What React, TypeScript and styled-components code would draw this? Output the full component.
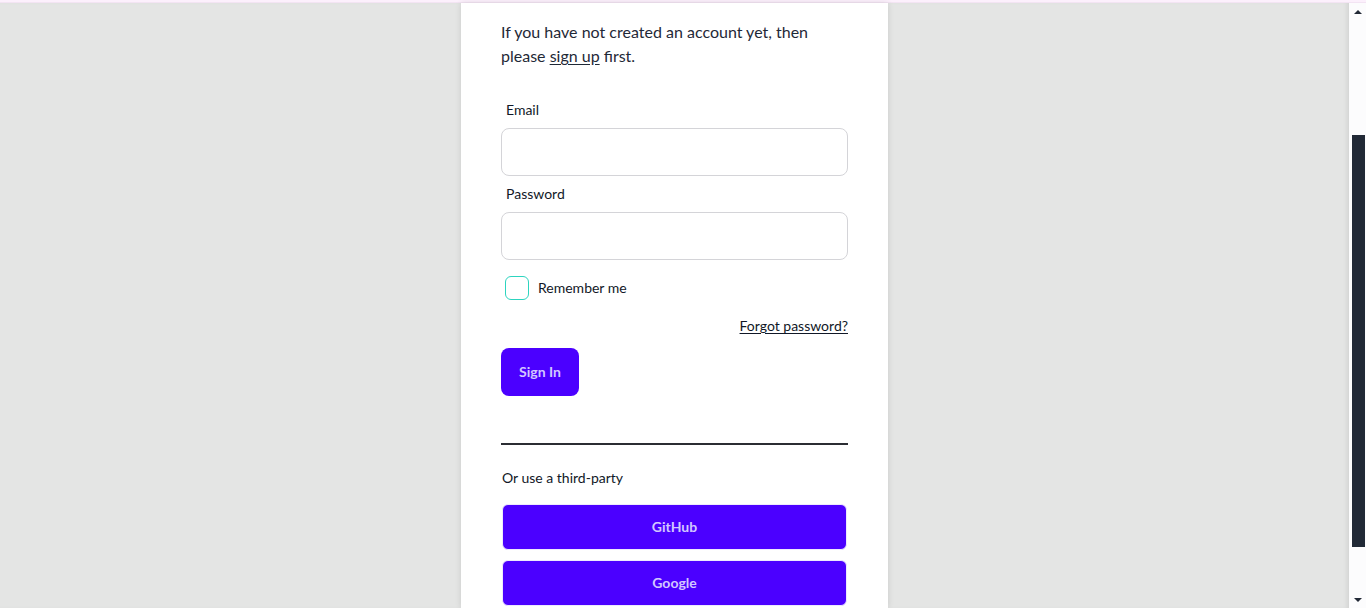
import { type FC } from 'react';
import styled, { createGlobalStyle } from 'styled-components';

// ── Global ─────────────────────────────────────────────────────────────────────

const GlobalStyle = createGlobalStyle`
  html, body {
    margin: 0;
    padding: 0;
    height: 100%;
    overflow: hidden;
  }
  body {
    font-family: Lato, "Noto Sans", sans-serif;
    color: #1f2937;
  }
`;

// ── Styled Components ──────────────────────────────────────────────────────────

const Screen = styled.div`
  display: flex;
  flex-direction: column;
  width: 1366px;
  height: 608px;
  overflow: hidden;
`;

const TopStrip = styled.div`
  height: 3px;
  flex-shrink: 0;
  background-color: #fcf0fc;
  border-bottom: 1px solid #f3e4f3;
  box-sizing: border-box;
`;

const Viewport = styled.div`
  display: flex;
  flex: 1;
  min-height: 0;
`;

const Page = styled.div`
  flex: 1;
  display: flex;
  justify-content: center;
  background-color: #e4e5e4;
  box-shadow: inset -4px 0 4px -2px rgba(0, 0, 0, 0.08);
`;

const Card = styled.div`
  width: 427px;
  box-sizing: border-box;
  background-color: #ffffff;
  padding: 17px 40px 0;
  display: flex;
  flex-direction: column;
  box-shadow: 0 0 6px rgba(0, 0, 0, 0.12);
`;

const Intro = styled.p`
  margin: 0 0 32px;
  font-size: 16px;
  line-height: 24px;
  color: #1f2937;
`;

const TextLink = styled.a`
  color: inherit;
  text-decoration: underline;
  text-underline-offset: 2px;
`;

const Field = styled.div`
  display: flex;
  flex-direction: column;
  gap: 8px;
  margin-bottom: 8px;
`;

const Label = styled.label`
  font-size: 14px;
  line-height: 20px;
  padding-left: 5px;
  color: #111827;
`;

const Input = styled.input`
  height: 48px;
  box-sizing: border-box;
  border: 1px solid #d4d4d8;
  border-radius: 8px;
  padding: 0 12px;
  font-size: 14px;
  outline: none;
`;

const CheckRow = styled.div`
  display: flex;
  align-items: center;
  gap: 9px;
  padding-left: 4px;
  margin-top: 8px;
  height: 24px;
`;

const CheckBox = styled.span`
  width: 24px;
  height: 24px;
  box-sizing: border-box;
  border: 1px solid #2dd4bf;
  border-radius: 6px;
`;

const CheckLabel = styled.span`
  font-size: 14px;
  line-height: 20px;
  margin-top: -1px;
  color: #111827;
`;

const ForgotRow = styled.div`
  display: flex;
  justify-content: flex-end;
  margin-top: 16px;
  font-size: 14px;
  line-height: 20px;
  color: #111827;
`;

const SignInButton = styled.button`
  align-self: flex-start;
  margin-top: 12px;
  height: 48px;
  width: 78px;
  padding: 0 0 1px;
  border: none;
  border-radius: 8px;
  background-color: #4b00ff;
  color: #d2c7ff;
  font-family: inherit;
  font-size: 14px;
  font-weight: 700;
`;

const Divider = styled.hr`
  margin: 47px 0 0;
  border: none;
  height: 2px;
  background-color: #2b2d33;
`;

const ThirdPartyText = styled.p`
  margin: 23px 0 16px 1px;
  font-size: 14px;
  line-height: 20px;
  color: #111827;
`;

const ProviderList = styled.div`
  display: flex;
  flex-direction: column;
  gap: 10px;
  padding: 0 1px;
`;

const ProviderButton = styled.button`
  height: 46px;
  padding: 0 0 1px;
  border: 1px solid #ede9fe;
  border-radius: 6px;
  background-color: #4b00ff;
  color: #d2c7ff;
  font-family: inherit;
  font-size: 14px;
  font-weight: 700;
`;

const ScrollTrack = styled.div`
  width: 17px;
  flex-shrink: 0;
  display: flex;
  flex-direction: column;
  align-items: center;
  background-color: #fcfcfd;
`;

const ScrollArrow = styled.div<{ $down?: boolean }>`
  height: 17px;
  width: 100%;
  display: flex;
  align-items: center;
  justify-content: center;

  &::after {
    content: '';
    border-left: 4px solid transparent;
    border-right: 4px solid transparent;
    ${(p) =>
      p.$down
        ? 'border-top: 4px solid #222936;'
        : 'border-bottom: 4px solid #222936;'}
  }
`;

const ScrollSpacer = styled.div<{ $size: number }>`
  height: ${(p) => p.$size}px;
  flex-shrink: 0;
`;

const ScrollFill = styled.div`
  flex: 1;
`;

const ScrollThumb = styled.div`
  width: 13px;
  height: 412px;
  flex-shrink: 0;
  margin-left: 1px;
  background-color: #212936;
`;

// ── App ────────────────────────────────────────────────────────────────────────

const App: FC = () => (
  <>
    <GlobalStyle />
    <Screen>
      <TopStrip />
      <Viewport>
        <Page>
          <Card>
            <Intro>
              If you have not created an account yet, then please{' '}
              <TextLink href="#">sign up</TextLink> first.
            </Intro>

            <Field>
              <Label>Email</Label>
              <Input type="email" />
            </Field>
            <Field>
              <Label>Password</Label>
              <Input type="password" />
            </Field>

            <CheckRow>
              <CheckBox />
              <CheckLabel>Remember me</CheckLabel>
            </CheckRow>

            <ForgotRow>
              <TextLink href="#">Forgot password?</TextLink>
            </ForgotRow>

            <SignInButton>Sign In</SignInButton>

            <Divider />

            <ThirdPartyText>Or use a third-party</ThirdPartyText>
            <ProviderList>
              <ProviderButton>GitHub</ProviderButton>
              <ProviderButton>Google</ProviderButton>
            </ProviderList>
          </Card>
        </Page>
        <ScrollTrack>
          <ScrollArrow />
          <ScrollSpacer $size={115} />
          <ScrollThumb />
          <ScrollFill />
          <ScrollArrow $down />
        </ScrollTrack>
      </Viewport>
    </Screen>
  </>
);

export default App;
